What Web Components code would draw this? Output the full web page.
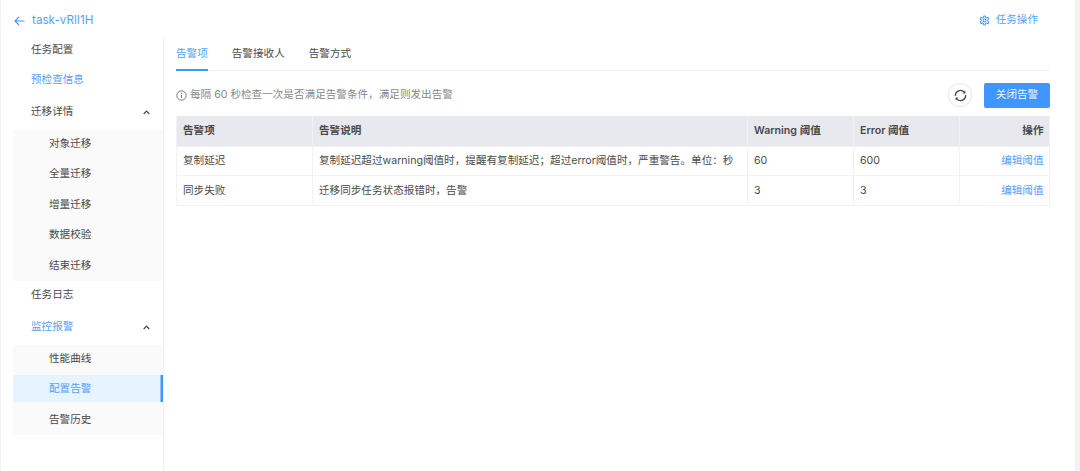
<!DOCTYPE html>
<html lang="zh">
<head>
<meta charset="utf-8">
<title>task-vRlI1H</title>
<style>
  html, body { margin: 0; height: 100%; overflow: hidden; background: #f0f2f5; }
  body { font: 10.6px/1.4 Inter, "Noto Sans CJK SC", sans-serif; color: #4a4a4a; }
</style>
</head>
<body>
<task-page>
  <task-header slot="header" title-text="task-vRlI1H" action="任务操作"></task-header>
  <side-nav slot="nav">
    <nav-item>任务配置</nav-item>
    <nav-item link>预检查信息</nav-item>
    <nav-group label="迁移详情">
      <nav-item sub>对象迁移</nav-item>
      <nav-item sub>全量迁移</nav-item>
      <nav-item sub>增量迁移</nav-item>
      <nav-item sub>数据校验</nav-item>
      <nav-item sub>结束迁移</nav-item>
    </nav-group>
    <nav-item>任务日志</nav-item>
    <nav-group label="监控报警" link>
      <nav-item sub>性能曲线</nav-item>
      <nav-item sub active>配置告警</nav-item>
      <nav-item sub>告警历史</nav-item>
    </nav-group>
  </side-nav>
  <alert-panel slot="main"></alert-panel>
</task-page>

<script>
// page frame: header on top, nav + content underneath
class TaskPage extends HTMLElement {
  connectedCallback() {
    this.attachShadow({ mode: 'open' });
    this.shadowRoot.innerHTML = `
      <style>
        :host { display: flex; flex-direction: column; width: 1074px; height: 471px; margin-left: 1px; background: #fff; }
        .body { display: flex; flex: 1; min-height: 0; }
      </style>
      <slot name="header"></slot>
      <div class="body">
        <slot name="nav"></slot>
        <slot name="main"></slot>
      </div>
    `;
  }
}

class TaskHeader extends HTMLElement {
  connectedCallback() {
    this.attachShadow({ mode: 'open' });
    this.shadowRoot.innerHTML = `
      <style>
        :host { display: flex; align-items: center; justify-content: space-between; height: 36px; padding: 5px 37px 0 13px; box-sizing: border-box; color: #559ffa; }
        .left, .right { display: flex; align-items: center; }
        .title { font-size: 11.7px; margin-left: 7px; }
        .right span { margin-left: 6px; }
        svg { display: block; }
      </style>
      <div class="left">
        <svg width="11" height="10" viewBox="0 0 11 10" fill="none" stroke="#4096ff" stroke-width="1.1"><path d="M10.5 5H1M5 1 1 5l4 4"/></svg>
        <span class="title">${this.getAttribute('title-text')}</span>
      </div>
      <div class="right">
        <svg width="11" height="11" viewBox="0 0 24 24" fill="none" stroke="#4096ff" stroke-width="2.2" stroke-linejoin="round"><path d="M12.22 2h-.44a2 2 0 0 0-2 2v.18a2 2 0 0 1-1 1.73l-.43.25a2 2 0 0 1-2 0l-.15-.08a2 2 0 0 0-2.73.73l-.22.38a2 2 0 0 0 .73 2.73l.15.1a2 2 0 0 1 1 1.72v.51a2 2 0 0 1-1 1.74l-.15.09a2 2 0 0 0-.73 2.73l.22.38a2 2 0 0 0 2.73.73l.15-.08a2 2 0 0 1 2 0l.43.25a2 2 0 0 1 1 1.73V20a2 2 0 0 0 2 2h.44a2 2 0 0 0 2-2v-.18a2 2 0 0 1 1-1.73l.43-.25a2 2 0 0 1 2 0l.15.08a2 2 0 0 0 2.73-.73l.22-.39a2 2 0 0 0-.73-2.73l-.15-.08a2 2 0 0 1-1-1.74v-.5a2 2 0 0 1 1-1.74l.15-.09a2 2 0 0 0 .73-2.73l-.22-.38a2 2 0 0 0-2.73-.73l-.15.08a2 2 0 0 1-2 0l-.43-.25a2 2 0 0 1-1-1.73V4a2 2 0 0 0-2-2z"/><circle cx="12" cy="12" r="3.2"/></svg>
        <span>${this.getAttribute('action')}</span>
      </div>
    `;
  }
}

class SideNav extends HTMLElement {
  connectedCallback() {
    this.attachShadow({ mode: 'open' });
    this.shadowRoot.innerHTML = `
      <style>
        :host { display: block; width: 163px; flex: none; box-sizing: border-box; padding: .5px 0 0 12px; border-right: 1px solid #f0f0f0; }
      </style>
      <slot></slot>
    `;
  }
}

class NavItem extends HTMLElement {
  connectedCallback() {
    this.attachShadow({ mode: 'open' });
    this.shadowRoot.innerHTML = `
      <style>
        :host { display: flex; align-items: center; box-sizing: border-box; height: 27px; margin-bottom: 3px; padding: 1px 0 0 18px; color: #4a4a4a; }
        :host([link]) { color: #559ffa; }
        :host([sub]) { padding: 2px 0 0 36px; margin-bottom: 0; }
        :host([active]) { color: #559ffa; background: #e6f4ff; box-shadow: inset -2.5px 0 0 #4096ff; }
      </style>
      <slot></slot>
    `;
  }
}

class NavGroup extends HTMLElement {
  connectedCallback() {
    this.attachShadow({ mode: 'open' });
    const link = this.hasAttribute('link');
    this.shadowRoot.innerHTML = `
      <style>
        :host { display: block; margin-top: 5.5px; }
        .title { display: flex; align-items: center; justify-content: space-between; height: 27px; margin-bottom: 4px; padding: 0 13px 0 18px; color: ${link ? '#559ffa' : '#4a4a4a'}; }
        .items { display: flex; flex-direction: column; gap: 3.4px; background: #fafafa; padding-bottom: 2.6px; }
        svg { display: block; }
      </style>
      <div class="title">
        <span>${this.getAttribute('label')}</span>
        <svg width="7" height="5" viewBox="0 0 7 5" fill="none" stroke="#444" stroke-width="1.2"><path d="M.7 4 3.5 1.2 6.3 4"/></svg>
      </div>
      <div class="items"><slot></slot></div>
    `;
  }
}

class AlertTabs extends HTMLElement {
  connectedCallback() {
    this.attachShadow({ mode: 'open' });
    this.shadowRoot.innerHTML = `
      <style>
        :host { display: flex; gap: 24px; height: 35px; box-sizing: border-box; border-bottom: 1px solid #f0f0f0; }
        div { height: 35px; box-sizing: border-box; padding-top: 10.5px; color: #4a4a4a; }
        .on { color: #559ffa; border-bottom: 2px solid #4096ff; }
      </style>
      <div class="on">告警项</div>
      <div>告警接收人</div>
      <div>告警方式</div>
    `;
  }
}

class AlertToolbar extends HTMLElement {
  connectedCallback() {
    this.attachShadow({ mode: 'open' });
    this.shadowRoot.innerHTML = `
      <style>
        :host { display: flex; align-items: center; height: 25px; margin-top: 11.5px; color: #888; }
        .tip { display: flex; align-items: center; gap: 3px; flex: 1; padding-top: 1px; }
        .sync { display: flex; align-items: center; justify-content: center; width: 24px; height: 24px; box-sizing: border-box; border: 1px solid #e8e8e8; border-radius: 50%; box-shadow: 0 0 2px rgba(0,0,0,.08); }
        button { width: 66px; height: 25px; margin-left: 12px; padding: 1px 0 0; border: 0; border-radius: 2px; background: #4096ff; color: #f2f7ff; font: inherit; }
        svg { display: block; }
      </style>
      <div class="tip">
        <svg width="11" height="11" viewBox="0 0 11 11" fill="none" stroke="#777"><circle cx="5.5" cy="5.5" r="4.7"/><path d="M5.5 4.8v3.2M5.5 2.8v1"/></svg>
        <span>每隔 60 秒检查一次是否满足告警条件，满足则发出告警</span>
      </div>
      <div class="sync">
        <svg width="13" height="13" viewBox="0 0 13 13" fill="none" stroke="#444" stroke-width="1.3"><path d="M1.4 6.9A5.1 5.1 0 0 1 10.3 3.1"/><path d="M11.6 6.1A5.1 5.1 0 0 1 2.7 9.9"/><path d="M11.4 1.6v2.9H8.6z" fill="#444" stroke="none"/><path d="M1.6 11.4V8.5h2.8z" fill="#444" stroke="none"/></svg>
      </div>
      <button>关闭告警</button>
    `;
  }
}

const ALERT_ROWS = [
  ['复制延迟', '复制延迟超过warning阈值时，提醒有复制延迟；超过error阈值时，严重警告。单位：秒', '60', '600'],
  ['同步失败', '迁移同步任务状态报错时，告警', '3', '3']
];

class AlertTable extends HTMLElement {
  connectedCallback() {
    this.attachShadow({ mode: 'open' });
    const rows = ALERT_ROWS.map(r => `
      <tr>${r.map(c => `<td>${c}</td>`).join('')}<td class="op"><a>编辑阈值</a></td></tr>`).join('');
    this.shadowRoot.innerHTML = `
      <style>
        :host { display: block; margin-top: 8.5px; }
        table { width: 873px; table-layout: fixed; border-collapse: collapse; font: inherit; color: #4a4a4a; }
        th, td { height: 29.5px; padding: 1.5px 5.5px 0 6px; box-sizing: border-box; text-align: left; border: 1px solid #f2f2f2; }
        th { height: 30px; background: #e8e9ee; font-weight: 600; border-color: #f0f1f4; border-top: 0; }
        .op { text-align: right; }
        a { color: #559ffa; }
      </style>
      <table>
        <colgroup><col style="width:136px"><col style="width:435px"><col style="width:106px"><col style="width:106px"><col style="width:90px"></colgroup>
        <thead><tr><th>告警项</th><th>告警说明</th><th>Warning 阈值</th><th>Error 阈值</th><th class="op">操作</th></tr></thead>
        <tbody>${rows}</tbody>
      </table>
    `;
  }
}

class AlertPanel extends HTMLElement {
  connectedCallback() {
    this.attachShadow({ mode: 'open' });
    this.shadowRoot.innerHTML = `
      <style>
        :host { display: block; flex: 1; min-width: 0; padding: 0 25px 0 12px; }
      </style>
      <alert-tabs></alert-tabs>
      <alert-toolbar></alert-toolbar>
      <alert-table></alert-table>
    `;
  }
}

customElements.define('task-page', TaskPage);
customElements.define('task-header', TaskHeader);
customElements.define('side-nav', SideNav);
customElements.define('nav-item', NavItem);
customElements.define('nav-group', NavGroup);
customElements.define('alert-tabs', AlertTabs);
customElements.define('alert-toolbar', AlertToolbar);
customElements.define('alert-table', AlertTable);
customElements.define('alert-panel', AlertPanel);
</script>
</body>
</html>
